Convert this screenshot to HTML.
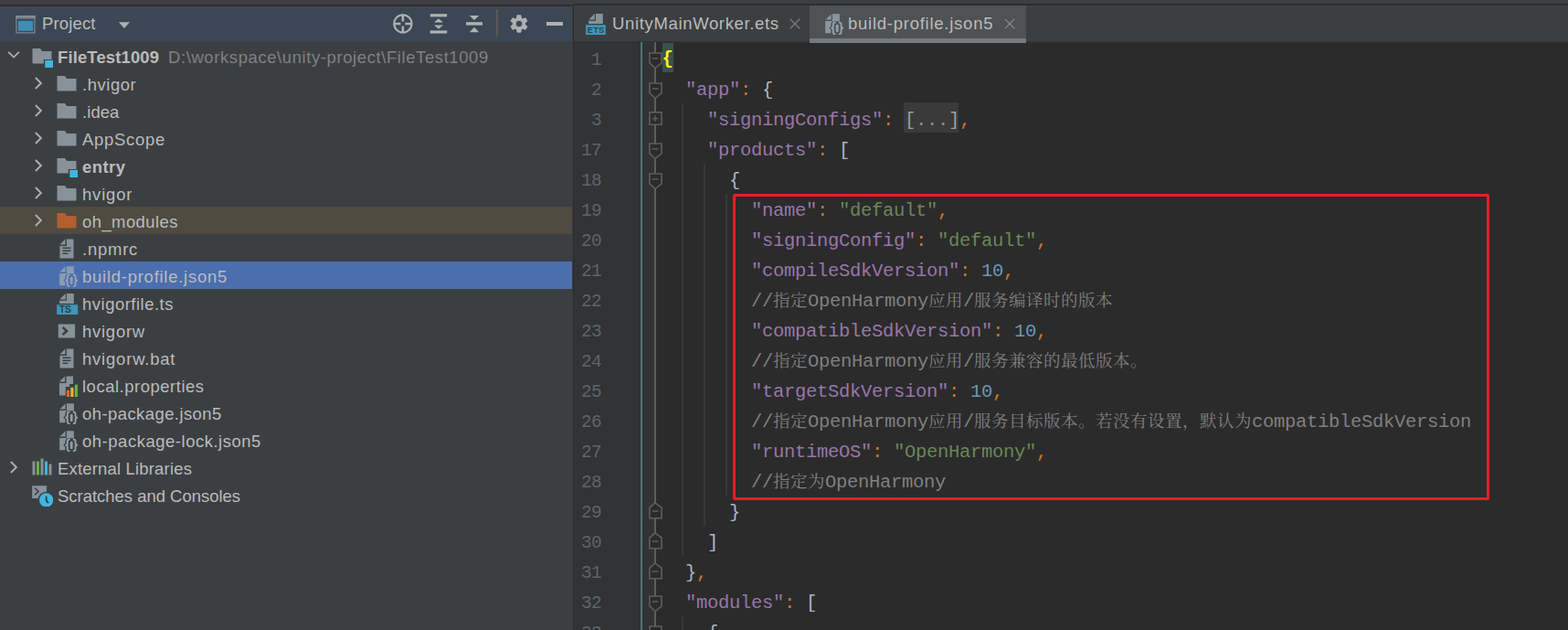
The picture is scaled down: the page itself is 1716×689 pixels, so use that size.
<!DOCTYPE html><html><head><meta charset="utf-8"><title>build-profile.json5</title><style>

html,body{margin:0;padding:0;background:#2B2B2B;}
body{width:1716px;height:689px;overflow:hidden;position:relative;font-family:"Liberation Sans",sans-serif;}
div,span,svg{position:absolute;box-sizing:border-box;}
.ic{overflow:hidden;}
.t{font-size:18.5px;line-height:30px;height:30px;color:#BBBBBB;white-space:pre;}
.b{font-weight:bold;}
.row{left:0;width:626px;height:30px;}
.code{font-family:"Liberation Mono",monospace;font-size:20.5px;letter-spacing:-0.3px;line-height:33px;height:33px;white-space:pre;color:#A9B7C6;}
.code span{position:static;}
.ln{font-family:"Liberation Mono",monospace;font-size:19.5px;line-height:33px;height:33px;color:#606366;width:60px;text-align:right;left:597.9px;letter-spacing:-0.7px;}
.k{color:#9876AA}.s{color:#6A8759}.n{color:#6897BB}.p{color:#CC7832}.c{color:#808080}
.code span.z{display:inline-block;width:19px;font-family:"Liberation Mono","Noto Serif CJK SC",monospace;font-size:18.5px;letter-spacing:0;text-align:left;line-height:33px;overflow:visible;white-space:nowrap;}
.g{width:1.6px;background:#383838;}

</style></head><body>
<div style="left:0;top:0;width:1716px;height:7px;background:#3C3F41"></div>
<div style="left:0;top:5px;width:626px;height:2px;background:#2E2D2C"></div>
<div style="left:627px;top:4px;width:1089px;height:2px;background:#2D2D2D"></div>
<div style="left:0;top:7px;width:626px;height:682px;background:#3C3F41"></div>
<div style="left:626px;top:4px;width:1px;height:685px;background:#3A3D3F"></div>
<div style="left:627px;top:4px;width:1px;height:685px;background:#2D2D2D"></div>
<div style="left:0;top:7px;width:626px;height:39px;background:#3B4754"></div>
<div style="left:0;top:45px;width:626px;height:1px;background:#394450"></div>
<svg class="ic" style="left:16px;top:14px" width="24" height="24" viewBox="0 0 24 24"><rect x="1.9" y="3.7" width="20" height="18.2" fill="none" stroke="#8A969D" stroke-opacity=".75" stroke-width="1.4"/><rect x="1.2" y="3" width="21.4" height="3.6" fill="#8A969D" fill-opacity=".75"/><rect x="3.9" y="8.8" width="16.2" height="11" fill="#3F8FB5"/></svg>
<div class="t" style="left:46px;top:11px;letter-spacing:0.150px;">Project</div>
<svg class="ic" style="left:128px;top:22px" width="16" height="12" viewBox="0 0 16 12"><path d="M2,2.2 L14,2.2 L8,9 Z" fill="#AFB1B3"/></svg>
<svg class="ic" style="left:428px;top:13px" width="26" height="26" viewBox="0 0 26 26"><g fill="none" stroke="#AFB1B3" stroke-width="1.9"><circle cx="12.9" cy="12.9" r="9.6" stroke-width="2.1"/><path stroke-width="2.5" d="M3.5,12.9 H10.4 M15.4,12.9 H22.3 M12.9,3.5 V10.4 M12.9,15.4 V22.3"/></g></svg>
<svg class="ic" style="left:468px;top:13px" width="24" height="26" viewBox="0 0 24 26"><g fill="#AFB1B3"><rect x="2.8" y="2.2" width="18.4" height="3.2"/><rect x="2.8" y="20.4" width="18.4" height="3.2"/><path d="M12,7.2 L17,11.6 L7,11.6 Z"/><path d="M12,18.8 L17,14.4 L7,14.4 Z"/></g></svg>
<svg class="ic" style="left:507px;top:13px" width="24" height="26" viewBox="0 0 24 26"><g fill="#AFB1B3"><rect x="3" y="11.2" width="18" height="3.4"/><path d="M12,9 L17.2,4 L6.8,4 Z"/><path d="M12,16.8 L17.2,22.2 L6.8,22.2 Z"/></g></svg>
<div style="left:543px;top:10px;width:2px;height:30px;background:#5B5851"></div>
<svg class="ic" style="left:556px;top:14px" width="24" height="24" viewBox="0 0 24 24"><path fill="#AFB1B3" fill-rule="evenodd" stroke="#AFB1B3" stroke-width=".8" stroke-linejoin="round" d="M9.58,5.75 L9.97,2.72 L14.03,2.72 L14.42,5.75 L16.20,6.78 L19.02,5.60 L21.05,9.11 L18.62,10.97 L18.62,13.03 L21.05,14.89 L19.02,18.40 L16.20,17.22 L14.42,18.25 L14.03,21.28 L9.97,21.28 L9.58,18.25 L7.80,17.22 L4.98,18.40 L2.95,14.89 L5.38,13.03 L5.38,10.97 L2.95,9.11 L4.98,5.60 L7.80,6.78 Z M8.30,12.00 a3.7,3.7 0 1,0 7.4,0 a3.7,3.7 0 1,0 -7.4,0 Z"/></svg>
<div style="left:598px;top:24.4px;width:18px;height:3.2px;background:#AFB1B3"></div>
<svg class="ic" style="left:5px;top:52.0px" width="20" height="16" viewBox="0 0 20 16"><path d="M4.2,4.8 L10,10.6 L15.8,4.8" fill="none" stroke="#AFB1B3" stroke-width="1.8"/></svg>
<svg class="ic" style="left:34px;top:50px" width="24" height="24" viewBox="0 0 16 16" style="overflow:visible"><path fill="#9AA7B0" fill-opacity=".8" d="M1 2h5.7l1.29 2H15v6H9.2v3H1z"/><rect x="10.2" y="10.6" width="5.8" height="5.6" fill="#40B6E0"/></svg>
<div class="t b" style="left:63px;top:48px;letter-spacing:0.118px;">FileTest1009</div>
<div class="t" style="left:184px;top:48px;color:#7F8183;letter-spacing:0.586px;">D:\workspace\unity-project\FileTest1009</div>
<svg class="ic" style="left:34px;top:80.7px" width="16" height="20" viewBox="0 0 16 20"><path d="M4.9,4 L10.9,10 L4.9,16" fill="none" stroke="#AFB1B3" stroke-width="1.8"/></svg>
<svg class="ic" style="left:61px;top:80px" width="24" height="24" viewBox="0 0 16 16" ><polygon fill="#9AA7B0" fill-opacity="0.8" points="1 13 15 13 15 4 7.985 4 6.696 2 1 2"/></svg>
<div class="t" style="left:90px;top:78px;letter-spacing:0.528px;">.hvigor</div>
<svg class="ic" style="left:34px;top:110.7px" width="16" height="20" viewBox="0 0 16 20"><path d="M4.9,4 L10.9,10 L4.9,16" fill="none" stroke="#AFB1B3" stroke-width="1.8"/></svg>
<svg class="ic" style="left:61px;top:110px" width="24" height="24" viewBox="0 0 16 16" ><polygon fill="#9AA7B0" fill-opacity="0.8" points="1 13 15 13 15 4 7.985 4 6.696 2 1 2"/></svg>
<div class="t" style="left:90px;top:108px;letter-spacing:0.069px;">.idea</div>
<svg class="ic" style="left:34px;top:140.7px" width="16" height="20" viewBox="0 0 16 20"><path d="M4.9,4 L10.9,10 L4.9,16" fill="none" stroke="#AFB1B3" stroke-width="1.8"/></svg>
<svg class="ic" style="left:61px;top:140px" width="24" height="24" viewBox="0 0 16 16" ><polygon fill="#9AA7B0" fill-opacity="0.8" points="1 13 15 13 15 4 7.985 4 6.696 2 1 2"/></svg>
<div class="t" style="left:90px;top:138px;letter-spacing:0.690px;">AppScope</div>
<svg class="ic" style="left:34px;top:170.7px" width="16" height="20" viewBox="0 0 16 20"><path d="M4.9,4 L10.9,10 L4.9,16" fill="none" stroke="#AFB1B3" stroke-width="1.8"/></svg>
<svg class="ic" style="left:61px;top:170px" width="24" height="24" viewBox="0 0 16 16" style="overflow:visible"><path fill="#9AA7B0" fill-opacity=".8" d="M1 2h5.7l1.29 2H15v6H9.2v3H1z"/><rect x="10.2" y="10.6" width="5.8" height="5.6" fill="#40B6E0"/></svg>
<div class="t b" style="left:90px;top:168px;letter-spacing:0.438px;">entry</div>
<svg class="ic" style="left:34px;top:200.7px" width="16" height="20" viewBox="0 0 16 20"><path d="M4.9,4 L10.9,10 L4.9,16" fill="none" stroke="#AFB1B3" stroke-width="1.8"/></svg>
<svg class="ic" style="left:61px;top:200px" width="24" height="24" viewBox="0 0 16 16" ><polygon fill="#9AA7B0" fill-opacity="0.8" points="1 13 15 13 15 4 7.985 4 6.696 2 1 2"/></svg>
<div class="t" style="left:90px;top:198px;letter-spacing:0.802px;">hvigor</div>
<div class="row" style="top:226px;background:#4F4B41"></div>
<svg class="ic" style="left:34px;top:230.7px" width="16" height="20" viewBox="0 0 16 20"><path d="M4.9,4 L10.9,10 L4.9,16" fill="none" stroke="#AFB1B3" stroke-width="1.8"/></svg>
<svg class="ic" style="left:61px;top:230px" width="24" height="24" viewBox="0 0 16 16" ><polygon fill="#B85E2E" fill-opacity="0.97" points="1 13 15 13 15 4 7.985 4 6.696 2 1 2"/></svg>
<div class="t" style="left:90px;top:228px;letter-spacing:0.401px;">oh_modules</div>
<svg class="ic" style="left:60.7px;top:260px" width="24" height="24" viewBox="0 0 16 16" ><polygon fill="#9AA7B0" fill-opacity=".8" points="7 1 3 5 7 5"/><path fill="#9AA7B0" fill-opacity=".8" d="M8,1 L8,6 L3,6 L3,15 L13,15 L13,1 Z M5,12 L5,11 L9,11 L9,12 Z M5,10 L5,9 L11,9 L11,10 Z M5,8 L5,7 L11,7 L11,8 Z"/></svg>
<div class="t" style="left:90px;top:258px;letter-spacing:0.751px;">.npmrc</div>
<div class="row" style="top:286px;background:#4B6EAF"></div>
<svg class="ic" style="left:61.6px;top:290px" width="24" height="24" viewBox="0 0 16 16" style="overflow:visible"><polygon fill="#9AA7B0" fill-opacity=".8" points="6.4 1 2.3 5 6.4 5"/><path fill="#9AA7B0" fill-opacity=".8" d="M7.3,.8 H12.6 V6.1 H8.7 Q6.3,6.3 6.3,8.4 V9.7 L4.9,11.15 L6.3,12.6 V14.8 H2.1 V6 H7.3 Z"/><g fill="none" stroke="#9AA7B0" stroke-opacity=".95" stroke-width="1.25"><path d="M9.7,7.0 Q7.9,7.0 7.9,8.5 V10 Q7.9,11.17 6.3,11.17 Q7.9,11.17 7.9,12.4 V14.1 Q7.9,15.6 9.7,15.6"/><path d="M11.9,7.0 Q13.7,7.0 13.7,8.5 V10 Q13.7,11.17 15.3,11.17 Q13.7,11.17 13.7,12.4 V14.1 Q13.7,15.6 11.9,15.6"/></g><rect x="9.85" y="8.5" width="1.9" height="5.6" rx=".95" fill="#9AA7B0" fill-opacity=".92"/></svg>
<div class="t" style="left:90px;top:288px;letter-spacing:0.738px;">build-profile.json5</div>
<svg class="ic" style="left:62px;top:320px" width="24" height="24" viewBox="0 0 16 16" style="overflow:visible"><polygon fill="#9AA7B0" fill-opacity=".8" points="6.5 .7 2.2 5 6.5 5"/><path fill="#9AA7B0" fill-opacity=".8" d="M7.3,.6 L12.5,.6 L12.5,8 L2.1,8 L2.1,5.9 L7.3,5.9 Z"/><rect x=".1" y="8.8" width="15.4" height="7.2" fill="#40B6E0" fill-opacity=".74"/><text x="1.9" y="14.75" font-family="Liberation Sans, sans-serif" font-weight="bold" font-size="7.0" fill="#231F20" fill-opacity=".72" letter-spacing="-0.1">TS</text></svg>
<div class="t" style="left:90px;top:318px;letter-spacing:0.493px;">hvigorfile.ts</div>
<svg class="ic" style="left:61.6px;top:350px" width="24" height="24" viewBox="0 0 16 16" ><path fill="#9AA7B0" fill-opacity=".8" d="M1.2,3 L13.4,3 L13.4,13 L1.2,13 Z M3.8,5.9 L6.1,8 L3.8,10.1 L5.0,11.4 L8.7,8 L5.0,4.6 Z"/></svg>
<div class="t" style="left:90px;top:348px;letter-spacing:0.742px;">hvigorw</div>
<svg class="ic" style="left:60.7px;top:380px" width="24" height="24" viewBox="0 0 16 16" ><polygon fill="#9AA7B0" fill-opacity=".8" points="7 1 3 5 7 5"/><path fill="#9AA7B0" fill-opacity=".8" d="M8,1 L8,6 L3,6 L3,15 L13,15 L13,1 Z M5,12 L5,11 L9,11 L9,12 Z M5,10 L5,9 L11,9 L11,10 Z M5,8 L5,7 L11,7 L11,8 Z"/></svg>
<div class="t" style="left:90px;top:378px;letter-spacing:0.791px;">hvigorw.bat</div>
<svg class="ic" style="left:61.6px;top:410px" width="24" height="24" viewBox="0 0 16 16" style="overflow:visible"><polygon fill="#9AA7B0" fill-opacity=".8" points="6 1 2 5 6 5"/><path fill="#9AA7B0" fill-opacity=".8" d="M7,1 L12,1 L12,6.6 L9.4,6.6 L9.4,8.6 L6.5,8.6 L6.5,15 L2,15 L2,6 L7,6 Z"/><rect x="7.3" y="11.2" width="2" height="4.9" fill="#F26522"/><rect x="10.2" y="9.2" width="2.1" height="6.9" fill="#F4AF3D"/><rect x="13.2" y="7.1" width="2.1" height="9" fill="#62B543"/></svg>
<div class="t" style="left:90px;top:408px;letter-spacing:0.510px;">local.properties</div>
<svg class="ic" style="left:61.6px;top:440px" width="24" height="24" viewBox="0 0 16 16" style="overflow:visible"><polygon fill="#9AA7B0" fill-opacity=".8" points="6.4 1 2.3 5 6.4 5"/><path fill="#9AA7B0" fill-opacity=".8" d="M7.3,.8 H12.6 V6.1 H8.7 Q6.3,6.3 6.3,8.4 V9.7 L4.9,11.15 L6.3,12.6 V14.8 H2.1 V6 H7.3 Z"/><g fill="none" stroke="#9AA7B0" stroke-opacity=".95" stroke-width="1.25"><path d="M9.7,7.0 Q7.9,7.0 7.9,8.5 V10 Q7.9,11.17 6.3,11.17 Q7.9,11.17 7.9,12.4 V14.1 Q7.9,15.6 9.7,15.6"/><path d="M11.9,7.0 Q13.7,7.0 13.7,8.5 V10 Q13.7,11.17 15.3,11.17 Q13.7,11.17 13.7,12.4 V14.1 Q13.7,15.6 11.9,15.6"/></g><rect x="9.85" y="8.5" width="1.9" height="5.6" rx=".95" fill="#9AA7B0" fill-opacity=".92"/></svg>
<div class="t" style="left:90px;top:438px;letter-spacing:0.416px;">oh-package.json5</div>
<svg class="ic" style="left:61.6px;top:470px" width="24" height="24" viewBox="0 0 16 16" style="overflow:visible"><polygon fill="#9AA7B0" fill-opacity=".8" points="6.4 1 2.3 5 6.4 5"/><path fill="#9AA7B0" fill-opacity=".8" d="M7.3,.8 H12.6 V6.1 H8.7 Q6.3,6.3 6.3,8.4 V9.7 L4.9,11.15 L6.3,12.6 V14.8 H2.1 V6 H7.3 Z"/><g fill="none" stroke="#9AA7B0" stroke-opacity=".95" stroke-width="1.25"><path d="M9.7,7.0 Q7.9,7.0 7.9,8.5 V10 Q7.9,11.17 6.3,11.17 Q7.9,11.17 7.9,12.4 V14.1 Q7.9,15.6 9.7,15.6"/><path d="M11.9,7.0 Q13.7,7.0 13.7,8.5 V10 Q13.7,11.17 15.3,11.17 Q13.7,11.17 13.7,12.4 V14.1 Q13.7,15.6 11.9,15.6"/></g><rect x="9.85" y="8.5" width="1.9" height="5.6" rx=".95" fill="#9AA7B0" fill-opacity=".92"/></svg>
<div class="t" style="left:90px;top:468px;letter-spacing:0.515px;">oh-package-lock.json5</div>
<svg class="ic" style="left:7px;top:500.7px" width="16" height="20" viewBox="0 0 16 20"><path d="M4.9,4 L10.9,10 L4.9,16" fill="none" stroke="#AFB1B3" stroke-width="1.8"/></svg>
<svg class="ic" style="left:34px;top:500px" width="24" height="24" viewBox="0 0 16 16" ><rect x="1" y="3" width="2" height="10" fill="#9AA7B0" fill-opacity=".8"/><rect x="4" y="3" width="2" height="10" fill="#62B543"/><rect x="7" y="1" width="2" height="12" fill="#9AA7B0" fill-opacity=".8"/><rect x="10" y="3" width="2" height="10" fill="#40B6E0"/><rect x="13" y="5" width="2" height="8" fill="#9AA7B0" fill-opacity=".8"/></svg>
<div class="t" style="left:63px;top:498px;letter-spacing:0.173px;">External Libraries</div>
<svg class="ic" style="left:34px;top:530px" width="24" height="24" viewBox="0 0 16 16" style="overflow:visible"><defs><mask id="scm"><rect x="0" y="0" width="16" height="16" fill="#fff"/><circle cx="11.1" cy="11.2" r="6.1" fill="#000"/></mask></defs><path mask="url(#scm)" fill="#9AA7B0" fill-opacity=".8" d="M.8,.8 L11.4,.8 L11.4,10 L.8,10 Z M2.3,2.9 L4.6,5 L2.3,7.1 L3.1,7.9 L6.2,5 L3.1,2.1 Z"/><circle cx="11.1" cy="11.2" r="5.1" fill="#40B6E0"/><path d="M11.1,8.3 L11.1,11.6 L12.7,13.4" fill="none" stroke="#2b3a42" stroke-width="1.1"/></svg>
<div class="t" style="left:63px;top:528px;letter-spacing:-0.025px;">Scratches and Consoles</div>
<div style="left:628px;top:6px;width:1088px;height:39px;background:#3C3F41"></div>
<div style="left:628px;top:45px;width:1088px;height:1.5px;background:#323232"></div>
<div style="left:886px;top:6px;width:237px;height:40.5px;background:#4E5254"></div>
<div style="left:886px;top:41.5px;width:237px;height:5px;background:#747A80"></div>
<svg class="ic" style="left:641px;top:14px" width="24" height="24" viewBox="0 0 16 16" style="overflow:visible"><polygon fill="#9AA7B0" fill-opacity=".8" points="6.5 .7 2.2 5 6.5 5"/><path fill="#9AA7B0" fill-opacity=".8" d="M7.3,.6 L12.5,.6 L12.5,8 L2.1,8 L2.1,5.9 L7.3,5.9 Z"/><rect x=".1" y="8.8" width="14.4" height="7.2" fill="#40B6E0" fill-opacity=".74"/><text x="1.1" y="14.75" font-family="Liberation Sans, sans-serif" font-weight="bold" font-size="6.2" fill="#231F20" fill-opacity=".72" letter-spacing="0.2">ETS</text></svg>
<div class="t" style="left:670px;top:11px;letter-spacing:0.654px;">UnityMainWorker.ets</div>
<svg class="ic" style="left:862px;top:18px" width="16" height="16" viewBox="0 0 16 16"><path d="M2.8,2.8 L13.2,13.2 M13.2,2.8 L2.8,13.2" stroke="#777B7E" stroke-width="1.3" fill="none"/></svg>
<svg class="ic" style="left:900px;top:14px" width="24" height="24" viewBox="0 0 16 16" style="overflow:visible"><polygon fill="#9AA7B0" fill-opacity=".8" points="6.4 1 2.3 5 6.4 5"/><path fill="#9AA7B0" fill-opacity=".8" d="M7.3,.8 H12.6 V6.1 H8.7 Q6.3,6.3 6.3,8.4 V9.7 L4.9,11.15 L6.3,12.6 V14.8 H2.1 V6 H7.3 Z"/><g fill="none" stroke="#9AA7B0" stroke-opacity=".95" stroke-width="1.25"><path d="M9.7,7.0 Q7.9,7.0 7.9,8.5 V10 Q7.9,11.17 6.3,11.17 Q7.9,11.17 7.9,12.4 V14.1 Q7.9,15.6 9.7,15.6"/><path d="M11.9,7.0 Q13.7,7.0 13.7,8.5 V10 Q13.7,11.17 15.3,11.17 Q13.7,11.17 13.7,12.4 V14.1 Q13.7,15.6 11.9,15.6"/></g><rect x="9.85" y="8.5" width="1.9" height="5.6" rx=".95" fill="#9AA7B0" fill-opacity=".92"/></svg>
<div class="t" style="left:928px;top:11px;letter-spacing:0.749px;">build-profile.json5</div>
<svg class="ic" style="left:1097px;top:18px" width="16" height="16" viewBox="0 0 16 16"><path d="M2.8,2.8 L13.2,13.2 M13.2,2.8 L2.8,13.2" stroke="#808487" stroke-width="1.3" fill="none"/></svg>
<div style="left:628px;top:46.2px;width:89px;height:643px;background:#313335"></div>
<div style="left:701px;top:46.2px;width:2px;height:643px;background:#4F766C"></div>
<div style="left:989px;top:112px;width:60px;height:33px;background:#3A3A3A"></div>
<div style="left:725px;top:47px;width:12px;height:32px;background:#3B514D"></div>
<div class="g" style="left:746.2px;top:113px;height:495px"></div>
<div class="g" style="left:746.2px;top:674px;height:33px"></div>
<div class="g" style="left:770.2px;top:179px;height:396px"></div>
<div class="g" style="left:794.2px;top:212px;height:330px"></div>
<div style="left:716.1px;top:46.2px;width:1.8px;height:643px;background:#5E5E5E"></div>
<div class="ln" style="top:49.5px">1</div>
<div class="code" style="left:726px;top:48.5px"><span style="color:#FFEF28;font-weight:bold;position:relative;left:-1.4px;top:-0.8px">{</span></div>
<svg class="ic" style="left:0;top:0" width="1716" height="689" viewBox="0 0 1716 689"><path d="M711.0,58.0 H724.0 V68.8 L717.0,74.5 L711.0,68.8 Z" fill="#2B2B2B" stroke="#5E5E5E" stroke-width="1.6" stroke-linejoin="miter"/><path d="M713.7,63.9 H720.4" stroke="#5E5E5E" stroke-width="1.5"/></svg>
<div class="ln" style="top:82.5px">2</div>
<div class="code" style="left:750px;top:81.5px"><span class="k">&quot;app&quot;</span><span class="p">:</span> {</div>
<svg class="ic" style="left:0;top:0" width="1716" height="689" viewBox="0 0 1716 689"><path d="M711.0,91.0 H724.0 V101.8 L717.0,107.5 L711.0,101.8 Z" fill="#2B2B2B" stroke="#5E5E5E" stroke-width="1.6" stroke-linejoin="miter"/><path d="M713.7,96.9 H720.4" stroke="#5E5E5E" stroke-width="1.5"/></svg>
<div class="ln" style="top:115.5px">3</div>
<div class="code" style="left:774px;top:114.5px"><span class="k">&quot;signingConfigs&quot;</span><span class="p">:</span> <span style="color:#8C8C8C"><span style="color:#99A1A8">[</span>...<span style="color:#99A1A8">]</span></span><span class="p">,</span></div>
<svg class="ic" style="left:0;top:0" width="1716" height="689" viewBox="0 0 1716 689"><path d="M711.0,122.9 H724.0 V136.3 H711.0 Z" fill="#2B2B2B" stroke="#5E5E5E" stroke-width="1.6" stroke-linejoin="miter"/><path d="M713.7,129.6 H720.4" stroke="#5E5E5E" stroke-width="1.5"/><path d="M717.0,126.19999999999999 V133.0" stroke="#5E5E5E" stroke-width="1.5"/></svg>
<div class="ln" style="top:148.5px">17</div>
<div class="code" style="left:774px;top:147.5px"><span class="k">&quot;products&quot;</span><span class="p">:</span> [</div>
<svg class="ic" style="left:0;top:0" width="1716" height="689" viewBox="0 0 1716 689"><path d="M711.0,157.0 H724.0 V167.8 L717.0,173.5 L711.0,167.8 Z" fill="#2B2B2B" stroke="#5E5E5E" stroke-width="1.6" stroke-linejoin="miter"/><path d="M713.7,162.9 H720.4" stroke="#5E5E5E" stroke-width="1.5"/></svg>
<div class="ln" style="top:181.5px">18</div>
<div class="code" style="left:798px;top:180.5px">{</div>
<svg class="ic" style="left:0;top:0" width="1716" height="689" viewBox="0 0 1716 689"><path d="M711.0,190.0 H724.0 V200.8 L717.0,206.5 L711.0,200.8 Z" fill="#2B2B2B" stroke="#5E5E5E" stroke-width="1.6" stroke-linejoin="miter"/><path d="M713.7,195.9 H720.4" stroke="#5E5E5E" stroke-width="1.5"/></svg>
<div class="ln" style="top:214.5px">19</div>
<div class="code" style="left:822px;top:213.5px"><span class="k">&quot;name&quot;</span><span class="p">:</span> <span class="s">&quot;default&quot;</span><span class="p">,</span></div>
<div class="ln" style="top:247.5px">20</div>
<div class="code" style="left:822px;top:246.5px"><span class="k">&quot;signingConfig&quot;</span><span class="p">:</span> <span class="s">&quot;default&quot;</span><span class="p">,</span></div>
<div class="ln" style="top:280.5px">21</div>
<div class="code" style="left:822px;top:279.5px"><span class="k">&quot;compileSdkVersion&quot;</span><span class="p">:</span> <span class="n">10</span><span class="p">,</span></div>
<div class="ln" style="top:313.5px">22</div>
<div class="code" style="left:822px;top:312.5px"><span class="c">//<span class="z">指</span><span class="z">定</span>OpenHarmony<span class="z">应</span><span class="z">用</span>/<span class="z">服</span><span class="z">务</span><span class="z">编</span><span class="z">译</span><span class="z">时</span><span class="z">的</span><span class="z">版</span><span class="z">本</span></span></div>
<div class="ln" style="top:346.5px">23</div>
<div class="code" style="left:822px;top:345.5px"><span class="k">&quot;compatibleSdkVersion&quot;</span><span class="p">:</span> <span class="n">10</span><span class="p">,</span></div>
<div class="ln" style="top:379.5px">24</div>
<div class="code" style="left:822px;top:378.5px"><span class="c">//<span class="z">指</span><span class="z">定</span>OpenHarmony<span class="z">应</span><span class="z">用</span>/<span class="z">服</span><span class="z">务</span><span class="z">兼</span><span class="z">容</span><span class="z">的</span><span class="z">最</span><span class="z">低</span><span class="z">版</span><span class="z">本</span><span class="z">。</span></span></div>
<div class="ln" style="top:412.5px">25</div>
<div class="code" style="left:822px;top:411.5px"><span class="k">&quot;targetSdkVersion&quot;</span><span class="p">:</span> <span class="n">10</span><span class="p">,</span></div>
<div class="ln" style="top:445.5px">26</div>
<div class="code" style="left:822px;top:444.5px"><span class="c">//<span class="z">指</span><span class="z">定</span>OpenHarmony<span class="z">应</span><span class="z">用</span>/<span class="z">服</span><span class="z">务</span><span class="z">目</span><span class="z">标</span><span class="z">版</span><span class="z">本</span><span class="z">。</span><span class="z">若</span><span class="z">没</span><span class="z">有</span><span class="z">设</span><span class="z">置</span><span class="z">，</span><span class="z">默</span><span class="z">认</span><span class="z">为</span>compatibleSdkVersion</span></div>
<div class="ln" style="top:478.5px">27</div>
<div class="code" style="left:822px;top:477.5px"><span class="k">&quot;runtimeOS&quot;</span><span class="p">:</span> <span class="s">&quot;OpenHarmony&quot;</span><span class="p">,</span></div>
<div class="ln" style="top:511.5px">28</div>
<div class="code" style="left:822px;top:510.5px"><span class="c">//<span class="z">指</span><span class="z">定</span><span class="z">为</span>OpenHarmony</span></div>
<div class="ln" style="top:544.5px">29</div>
<div class="code" style="left:798px;top:543.5px">}</div>
<svg class="ic" style="left:0;top:0" width="1716" height="689" viewBox="0 0 1716 689"><path d="M717.0,549.9 L724.0,555.2 V566.7 H711.0 V555.2 Z" fill="#2B2B2B" stroke="#5E5E5E" stroke-width="1.6" stroke-linejoin="miter"/><path d="M713.7,559.0 H720.4" stroke="#5E5E5E" stroke-width="1.5"/></svg>
<div class="ln" style="top:577.5px">30</div>
<div class="code" style="left:774px;top:576.5px">]</div>
<svg class="ic" style="left:0;top:0" width="1716" height="689" viewBox="0 0 1716 689"><path d="M717.0,582.9 L724.0,588.2 V599.7 H711.0 V588.2 Z" fill="#2B2B2B" stroke="#5E5E5E" stroke-width="1.6" stroke-linejoin="miter"/><path d="M713.7,592.0 H720.4" stroke="#5E5E5E" stroke-width="1.5"/></svg>
<div class="ln" style="top:610.5px">31</div>
<div class="code" style="left:750px;top:609.5px">}<span class="p">,</span></div>
<svg class="ic" style="left:0;top:0" width="1716" height="689" viewBox="0 0 1716 689"><path d="M717.0,615.9 L724.0,621.2 V632.7 H711.0 V621.2 Z" fill="#2B2B2B" stroke="#5E5E5E" stroke-width="1.6" stroke-linejoin="miter"/><path d="M713.7,625.0 H720.4" stroke="#5E5E5E" stroke-width="1.5"/></svg>
<div class="ln" style="top:643.5px">32</div>
<div class="code" style="left:750px;top:642.5px"><span class="k">&quot;modules&quot;</span><span class="p">:</span> [</div>
<svg class="ic" style="left:0;top:0" width="1716" height="689" viewBox="0 0 1716 689"><path d="M711.0,652.0 H724.0 V662.8 L717.0,668.5 L711.0,662.8 Z" fill="#2B2B2B" stroke="#5E5E5E" stroke-width="1.6" stroke-linejoin="miter"/><path d="M713.7,657.9 H720.4" stroke="#5E5E5E" stroke-width="1.5"/></svg>
<div class="ln" style="top:676.5px">33</div>
<div class="code" style="left:774px;top:675.5px">{</div>
<svg class="ic" style="left:0;top:0" width="1716" height="689" viewBox="0 0 1716 689"><path d="M711.0,685.0 H724.0 V695.8 L717.0,701.5 L711.0,695.8 Z" fill="#2B2B2B" stroke="#5E5E5E" stroke-width="1.6" stroke-linejoin="miter"/><path d="M713.7,690.9 H720.4" stroke="#5E5E5E" stroke-width="1.5"/></svg>
<div style="left:802px;top:212px;width:828px;height:334.5px;border:3px solid #EC1C24;border-radius:2px"></div>
</body></html>
